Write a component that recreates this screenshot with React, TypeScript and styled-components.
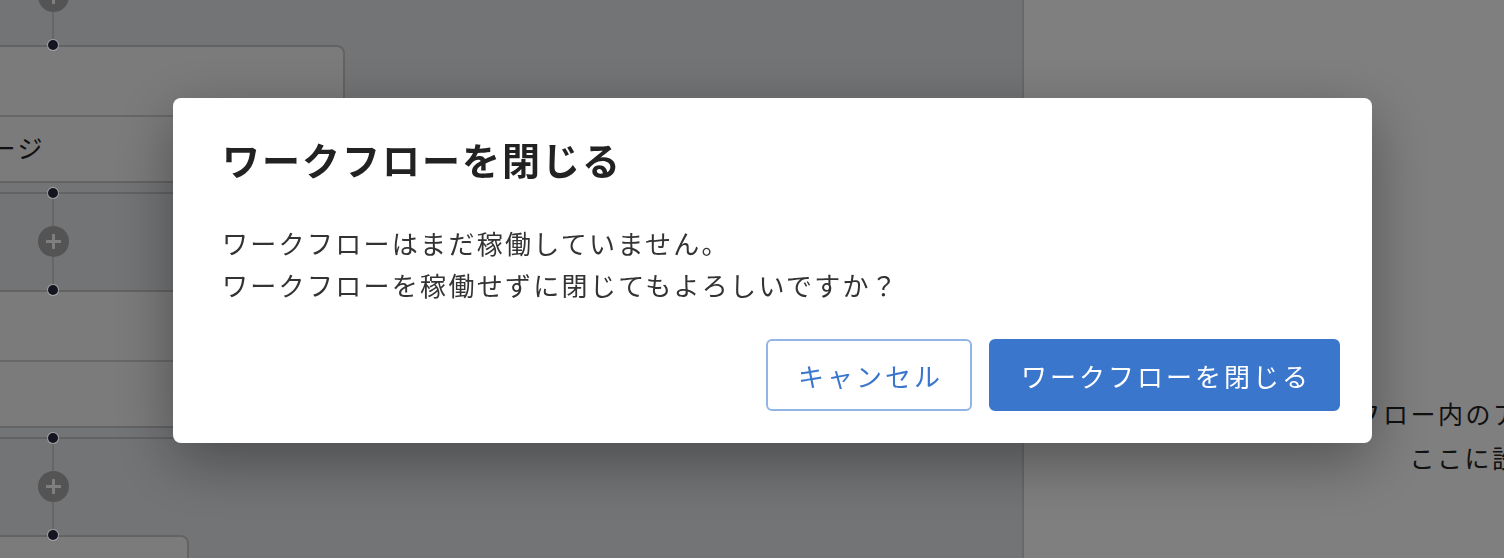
import React from "react";
import styled, { createGlobalStyle } from "styled-components";

const GlobalStyle = createGlobalStyle`
  html, body {
    margin: 0;
    padding: 0;
    height: 100%;
    overflow: hidden;
    background: #ffffff;
  }
  body {
    font-family: "Noto Sans CJK JP", "Noto Sans", sans-serif;
    color: #222222;
  }
  #root { height: 100%; }
  * { box-sizing: border-box; }
`;

const Page = styled.div`
  display: flex;
  height: 100vh;
  width: max-content;
`;

const Canvas = styled.div`
  flex: 0 0 1024px;
  height: 100%;
  background: #e6e8ec;
  border-right: 2px solid #d0d2d6;
  overflow: hidden;
`;

const Column = styled.div`
  display: flex;
  flex-direction: column;
  margin-left: -200px;
  margin-top: -53px;
  width: 1000px;
`;

const Connector = styled.div<{ $topLine?: boolean }>`
  display: flex;
  flex-direction: column;
  align-items: center;
  width: 506px;
  height: 98px;
  border-top: ${(p) => (p.$topLine ? "2px solid #c6c6c8" : "2px solid transparent")};
  margin-top: ${(p) => (p.$topLine ? "9px" : "0")};
`;

const Dot = styled.span<{ $edge: "top" | "bottom" }>`
  width: 10px;
  height: 10px;
  border-radius: 50%;
  background: #151522;
  box-shadow: 0 0 0 1px rgba(255, 255, 255, 0.35);
  flex: none;
  margin-top: ${(p) => (p.$edge === "top" ? "-6px" : "0")};
  margin-bottom: ${(p) => (p.$edge === "bottom" ? "-5px" : "0")};
  position: relative;
  z-index: 1;
`;

const Stem = styled.span`
  flex: 1;
  width: 2px;
  background: #cdcdcf;
`;

const PlusButton = styled.span`
  flex: none;
  width: 31px;
  height: 31px;
  border-radius: 50%;
  background: #a9a9a9;
  display: flex;
  align-items: center;
  justify-content: center;
`;

const Card = styled.div<{ $width: number }>`
  width: ${(p) => p.$width}px;
  height: 138px;
  background: #f6f6f6;
  border: 2px solid #c6c6c8;
  border-radius: 8px;
  display: flex;
  flex-direction: column;
`;

const CardHeader = styled.div`
  height: 70px;
  border-bottom: 2px solid #cfcfd1;
  flex: none;
`;

const CardBody = styled.div`
  flex: 1;
  display: flex;
  align-items: center;
  padding-left: 106px;
  padding-bottom: 4px;
  font-size: 25px;
  letter-spacing: 0.1em;
  color: #222;
  white-space: nowrap;
`;

const Panel = styled.div`
  flex: 0 0 1101px;
  height: 100%;
  background: #ffffff;
  padding-top: 391px;
  text-align: center;
`;

const PanelText = styled.p<{ $shift?: number }>`
  margin: 0;
  font-size: 25px;
  line-height: 44px;
  letter-spacing: 0.1em;
  color: #222;
`;

const Overlay = styled.div`
  position: fixed;
  inset: 0;
  background: rgba(0, 0, 0, 0.5);
  padding: 98px 0 0 173px;
`;

const Dialog = styled.div`
  width: 1199px;
  background: #ffffff;
  border-radius: 8px;
  padding: 35px 32px 32px 49px;
  box-shadow: 0 18px 60px rgba(0, 0, 0, 0.35);
  display: flex;
  flex-direction: column;
`;

const Title = styled.h2`
  margin: 0;
  font-size: 38px;
  line-height: 52px;
  font-weight: 700;
  letter-spacing: 2px;
  color: #222222;
`;

const Message = styled.p`
  margin: 37px 0 0;
  font-size: 26px;
  line-height: 42px;
  letter-spacing: 2.3px;
  color: #333333;
`;

const Footer = styled.div`
  margin-top: 33px;
  display: flex;
  justify-content: flex-end;
  gap: 17px;
`;

const Button = styled.button<{ $primary?: boolean }>`
  height: 72px;
  padding: 0 27px 0 30px;
  border-radius: 6px;
  font-family: "Noto Sans CJK JP", "Noto Sans", sans-serif;
  font-size: 26px;
  letter-spacing: 3px;
  cursor: pointer;
  border: 2px solid ${(p) => (p.$primary ? "#3b76cd" : "#93b5e6")};
  background: ${(p) => (p.$primary ? "#3b76cd" : "#ffffff")};
  color: ${(p) => (p.$primary ? "#ffffff" : "#3b76cd")};
`;

const PlusIcon = () => (
  <svg width="15" height="15" viewBox="0 0 15 15">
    <path d="M7.5 1v13M1 7.5h13" stroke="#ffffff" strokeWidth="3" strokeLinecap="round" />
  </svg>
);

const Link = ({ top = true }: { top?: boolean }) => (
  <Connector $topLine={top}>
    <Dot $edge="top" style={{ visibility: top ? "visible" : "hidden" }} />
    <Stem />
    <PlusButton>
      <PlusIcon />
    </PlusButton>
    <Stem />
    <Dot $edge="bottom" />
  </Connector>
);

export default function App() {
  return (
    <>
      <GlobalStyle />
      <Page>
        <Canvas>
          <Column>
            <Link top={false} />
            <Card $width={545}>
              <CardHeader />
              <CardBody>メッセージ</CardBody>
            </Card>
            <Link />
            <Card $width={900}>
              <CardHeader />
              <CardBody />
            </Card>
            <Link />
            <Card $width={389}>
              <CardHeader />
              <CardBody />
            </Card>
          </Column>
        </Canvas>
        <Panel>
          <PanelText>ワークフロー内のアクションをクリックすると、</PanelText>
          <PanelText>ここに設定が表示されます</PanelText>
        </Panel>
      </Page>
      <Overlay>
        <Dialog role="dialog" aria-modal="true">
          <Title>ワークフローを閉じる</Title>
          <Message>
            ワークフローはまだ稼働していません。
            <br />
            ワークフローを稼働せずに閉じてもよろしいですか？
          </Message>
          <Footer>
            <Button>キャンセル</Button>
            <Button $primary>ワークフローを閉じる</Button>
          </Footer>
        </Dialog>
      </Overlay>
    </>
  );
}
